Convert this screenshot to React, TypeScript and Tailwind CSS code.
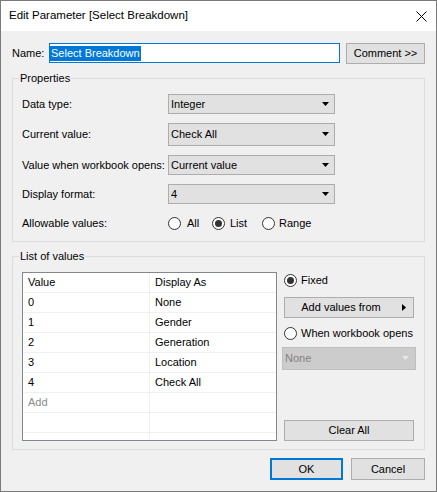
import React from "react";

const FONT = { fontFamily: '"Liberation Sans", Arial, sans-serif' };

function Arrow({ color = "#000" }: { color?: string }) {
  return (
    <svg width="8" height="5" viewBox="0 0 8 5" className="block">
      <polygon points="0,0 7,0 3.5,4" fill={color} />
    </svg>
  );
}

function Dropdown({ value, h = "h-[20px]" }: { value: string; h?: string }) {
  return (
    <div
      className={`w-[167px] ${h} border border-[#adadad] bg-[#e1e1e1] flex items-center justify-between pl-[2px] pr-[4px]`}
    >
      <span className="leading-none">{value}</span>
      <Arrow />
    </div>
  );
}

function Radio({ checked = false }: { checked?: boolean }) {
  return (
    <div className="w-[13px] h-[13px] rounded-full border border-[#333333] bg-white flex items-center justify-center shrink-0">
      {checked && <div className="w-[7px] h-[7px] rounded-full bg-[#333333]" />}
    </div>
  );
}

function Button({ children, className = "" }: { children: React.ReactNode; className?: string }) {
  return (
    <div
      className={`border border-[#adadad] bg-[#e1e1e1] flex items-center justify-center leading-none ${className}`}
    >
      {children}
    </div>
  );
}

const rows: [string, string, boolean?][] = [
  ["Value", "Display As"],
  ["0", "None"],
  ["1", "Gender"],
  ["2", "Generation"],
  ["3", "Location"],
  ["4", "Check All"],
  ["Add", "", true],
  ["", ""],
  ["", ""],
];

export default function App() {
  return (
    <div
      className="w-[437px] h-[492px] border border-[#7a7a7a] bg-[#f0f0f0] flex flex-col text-[11px] text-black overflow-hidden"
      style={FONT}
    >
      {/* Title bar */}
      <div className="h-[30px] bg-white flex items-center justify-between pl-[8px] pr-[9px] shrink-0">
        <span className="text-[11.5px] leading-none">Edit Parameter [Select Breakdown]</span>
        <svg width="11" height="11" viewBox="0 0 11 11" className="block">
          <path d="M0.5 0.5 L10.5 10.5 M10.5 0.5 L0.5 10.5" stroke="#000" strokeWidth="1" />
        </svg>
      </div>

      {/* Name row */}
      <div className="mt-[12px] pl-[11px] flex items-start">
        <div className="w-[37px] h-[20px] flex items-center">Name:</div>
        <div className="w-[291px] h-[20px] border border-[#0078d7] bg-white flex items-center">
          <span className="bg-[#0078d7] text-white h-[15px] px-[1px] flex items-center leading-none">
            Select Breakdown
          </span>
        </div>
        <Button className="ml-[6px] w-[79px] h-[21px]">Comment &gt;&gt;</Button>
      </div>

      {/* Properties */}
      <div className="mt-[14px] ml-[11px] w-[413px] h-[164px] border border-[#dcdcdc] relative pl-[9px] pt-[15px] flex flex-col">
        <span className="absolute left-[6px] -top-[8px] px-[1px] bg-[#f0f0f0] leading-[14px]">Properties</span>
        <div className="flex items-center">
          <div className="w-[146px]">Data type:</div>
          <Dropdown value="Integer" />
        </div>
        <div className="flex items-center mt-[9px]">
          <div className="w-[146px]">Current value:</div>
          <Dropdown value="Check All" h="h-[23px]" />
        </div>
        <div className="flex items-center mt-[9px]">
          <div className="w-[146px]">Value when workbook opens:</div>
          <Dropdown value="Current value" />
        </div>
        <div className="flex items-center mt-[9px]">
          <div className="w-[146px]">Display format:</div>
          <Dropdown value="4" />
        </div>
        <div className="flex items-center mt-[13px] h-[13px]">
          <div className="w-[146px]">Allowable values:</div>
          <div className="w-[44px] flex items-center">
            <Radio />
            <span className="ml-[6px]">All</span>
          </div>
          <div className="w-[50px] flex items-center">
            <Radio checked />
            <span className="ml-[5px]">List</span>
          </div>
          <div className="flex items-center">
            <Radio />
            <span className="ml-[4px]">Range</span>
          </div>
        </div>
      </div>

      {/* List of values */}
      <div className="mt-[14px] ml-[11px] w-[413px] h-[194px] border border-[#dcdcdc] relative pl-[9px] pt-[15px] flex">
        <span className="absolute left-[6px] -top-[8px] px-[1px] bg-[#f0f0f0] leading-[14px]">List of values</span>
        <div className="w-[255px] h-[169px] border border-[#828790] bg-white overflow-hidden flex flex-col">
          {rows.map(([a, b, gray], i) => (
            <div key={i} className="flex h-[20px] shrink-0 border-b border-[#f0f0f0]">
              <div
                className={`w-[127px] border-r border-[#f0f0f0] pl-[5px] flex items-center ${gray ? "text-[#8c8c8c]" : ""}`}
              >
                {a}
              </div>
              <div className="flex-1 pl-[5px] flex items-center">{b}</div>
            </div>
          ))}
        </div>
        <div className="ml-[7px] w-[130px] h-[169px] flex flex-col">
          <div className="h-[17px] flex items-center">
            <Radio checked />
            <span className="ml-[4px]">Fixed</span>
          </div>
          <Button className="mt-[8px] h-[21px] relative pr-[16px]">
            <span>Add values from</span>
            <svg width="4" height="7" viewBox="0 0 4 7" className="absolute right-[7px] top-[6px] block">
              <polygon points="0,0 4,3.5 0,7" fill="#000" />
            </svg>
          </Button>
          <div className="mt-[7px] h-[17px] flex items-center">
            <Radio />
            <span className="ml-[4px]">When workbook opens</span>
          </div>
          <div className="mt-[5px] -ml-[2px] w-[134px] h-[23px] border border-[#bfbfbf] bg-[#cccccc] flex items-center justify-between pl-[2px] pr-[5px] text-[#838383]">
            <span className="leading-none">None</span>
            <Arrow color="#e8e8e8" />
          </div>
          <Button className="mt-auto h-[21px]">Clear All</Button>
        </div>
      </div>

      {/* Bottom buttons */}
      <div className="mt-[8px] pr-[11px] flex justify-end gap-[8px]">
        <div className="w-[73px] h-[22px] border-2 border-[#0078d7] bg-[#e1e1e1] flex items-center justify-center leading-none">
          OK
        </div>
        <Button className="w-[74px] h-[22px]">Cancel</Button>
      </div>
    </div>
  );
}
